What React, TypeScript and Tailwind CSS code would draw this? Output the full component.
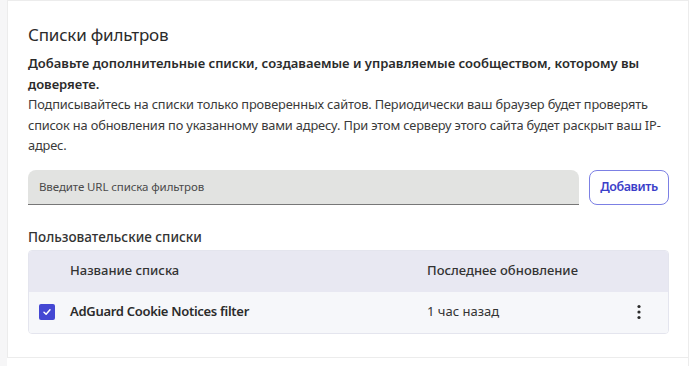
import React from 'react';

const font = { fontFamily: '"Noto Sans", "Open Sans", sans-serif' };

function Kebab() {
  return (
    <svg width="4" height="16" viewBox="0 0 4 16" fill="#2b2b2b">
      <circle cx="2" cy="2.5" r="1.6" />
      <circle cx="2" cy="8" r="1.6" />
      <circle cx="2" cy="13.5" r="1.6" />
    </svg>
  );
}

export default function App() {
  return (
    <div className="w-[689px] h-[366px] bg-[#f6f6f7] pl-[7px] overflow-hidden text-[#2f2f2f]" style={font}>
      <div className="bg-white border-t border-l border-r border-[#ececec] h-[357px] pl-[20px] pr-[19px] pt-[22px]">
        <h2 className="text-[17px] leading-6 text-[#2b2b2b] tracking-[-0.2px]">Списки фильтров</h2>
        <div className="mt-[6px] text-[13px] leading-[20.5px] text-[#3a3a3a]">
          <p className="font-semibold text-[#2b2b2b]">
            Добавьте дополнительные списки, создаваемые и управляемые сообществом, которому вы доверяете.
          </p>
          <p className="text-[12.8px] tracking-[-0.15px]">
            Подписывайтесь на списки только проверенных сайтов. Периодически ваш браузер будет проверять список на обновления по указанному вами адресу. При этом серверу этого сайта будет раскрыт ваш IP-адрес.
          </p>
        </div>

        <div className="mt-[14px] flex items-start gap-[10px]">
          <div className="flex-1 h-[35px] bg-[#e2e3e1] rounded-t-[8px] border-b border-[#777] flex items-center px-[11px]">
            <input
              className="w-full bg-transparent outline-none text-[11.5px] tracking-[-0.1px] text-[#444] placeholder:text-[#4a4a4a]"
              placeholder="Введите URL списка фильтров"
              style={font}
            />
          </div>
          <button className="h-[35px] w-[80px] rounded-[8px] border border-[#7c80e4] text-[#3b3ec9] text-[12.5px] font-semibold tracking-[-0.4px]" style={font}>
            Добавить
          </button>
        </div>

        <h3 className="mt-[22px] text-[13.5px] leading-5 font-medium text-[#333]">Пользовательские списки</h3>

        <div className="mt-[3px] rounded-[4px] border border-[#e4e5ee] overflow-hidden text-[13px]">
          <div className="h-[41px] bg-[#e8e8f2] flex items-center font-medium text-[#333]">
            <div className="w-[41px]" />
            <div className="w-[357px]">Название списка</div>
            <div>Последнее обновление</div>
          </div>
          <div className="h-[41px] bg-[#f6f7fa] flex items-center">
            <div className="w-[41px] pl-[10px]">
              <span className="w-[16px] h-[16px] rounded-[2px] bg-[#4447d3] flex items-center justify-center">
                <svg width="10" height="10" viewBox="0 0 10 10" fill="none" stroke="white" strokeWidth="1.5" strokeLinecap="round" strokeLinejoin="round">
                  <path d="M2 5.3 L4.1 7.3 L8 2.8" />
                </svg>
              </span>
            </div>
            <div className="w-[357px] font-semibold text-[#2b2b2b] tracking-[-0.3px]">AdGuard Cookie Notices filter</div>
            <div className="flex-1 text-[#333]">1 час назад</div>
            <div className="w-[58px] flex justify-center">
              <Kebab />
            </div>
          </div>
        </div>
      </div>
      <div className="border-t border-r border-[#ececec] bg-white h-[9px]" />
    </div>
  );
}
